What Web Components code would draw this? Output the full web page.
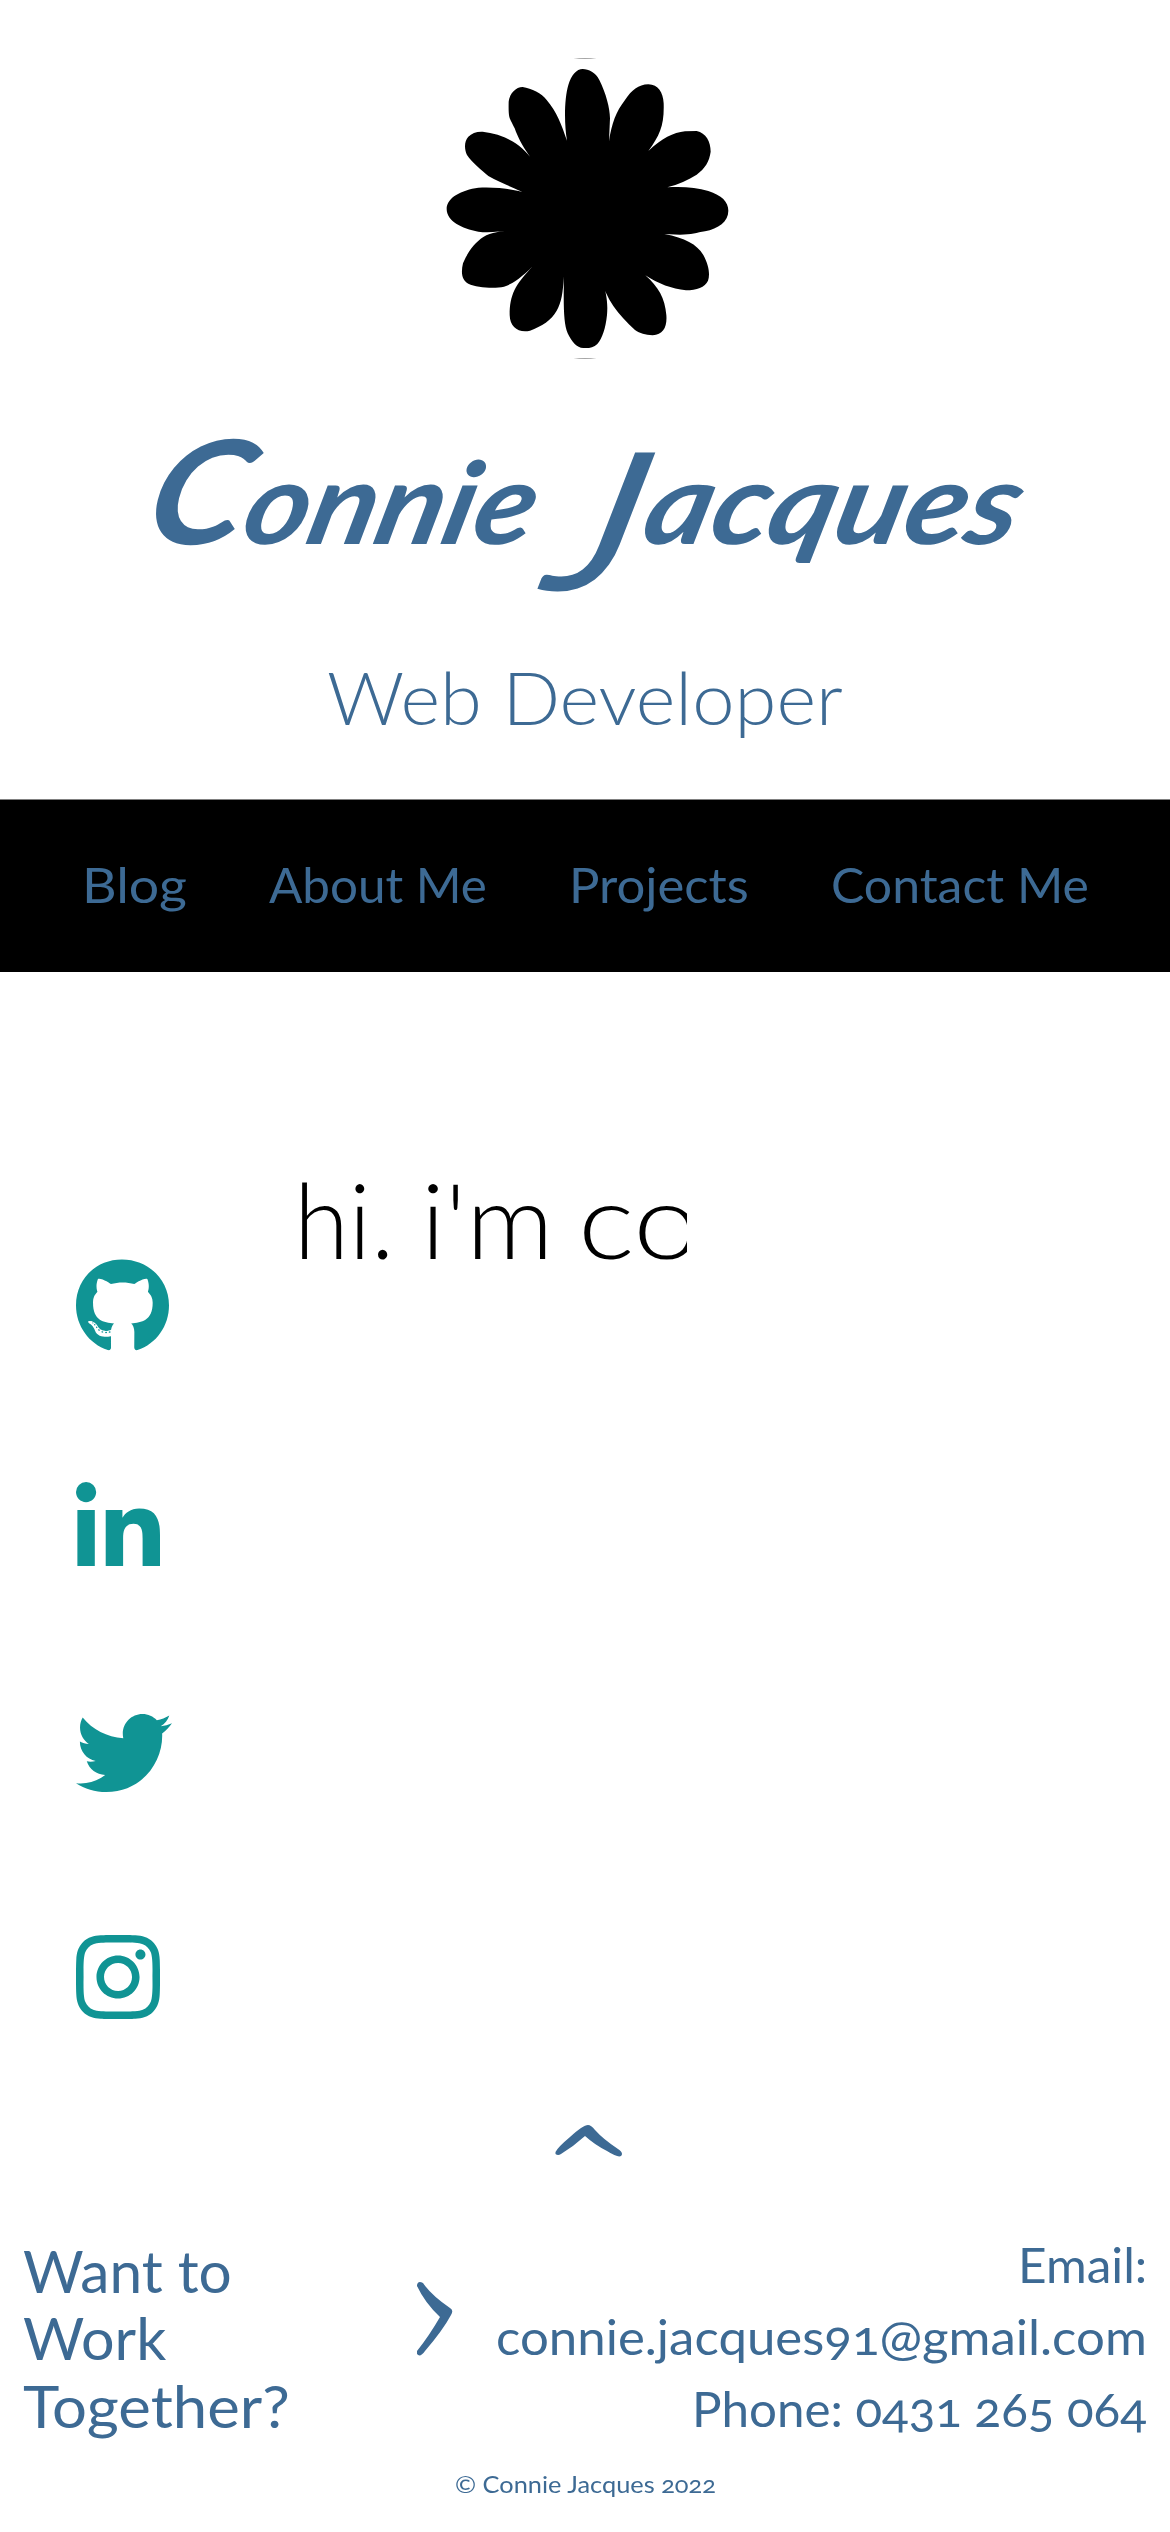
<!DOCTYPE html>
<html lang="en">
<head>
<meta charset="utf-8">
<title>Connie Jacques</title>
<style>
html,body{margin:0;background:#fff}
body{font-family:Lato,"Open Sans",sans-serif;color:#3d6a94;--brand:#3d6a94;--teal:#109494}
</style>
</head>
<body>
<portfolio-page></portfolio-page>
<script>
const define=(name,html,after)=>customElements.define(name,class extends HTMLElement{
  constructor(){super();this.attachShadow({mode:'open'}).innerHTML=html;}
  connectedCallback(){if(after)after.call(this,this.shadowRoot);}
});

/* One line of text widened or narrowed to the width given in its w attribute. */
define('fit-line',`<style>:host{display:block;white-space:pre}span{display:inline-block;transform-origin:0 50%}</style><span><slot></slot></span>`,function(root){
  const w=+this.getAttribute('w');this.style.width=w+'px';
  const s=root.querySelector('span');
  s.style.transform='scaleX('+w/s.offsetWidth+')';
});

/* A word of the signature: tall first letter, small slanted letters after it. */
define('script-word',`<style>:host{display:block;height:140px}
div{display:inline-block;white-space:nowrap;transform-origin:0 124px;font:italic 700 114px/140px Lato,sans-serif}
div::first-letter{font-size:var(--initial,144px);font-weight:var(--weight,700);line-height:0;vertical-align:var(--drop,0)}</style><div></div>`,function(root){
  const w=+this.getAttribute('w'),d=root.querySelector('div');
  d.textContent=this.getAttribute('word');this.style.width=w+'px';
  d.style.transform='skewX(-14deg) scaleX('+w/d.offsetWidth+')';
});

define('flower-mark',`<style>:host{display:block;width:310px;height:330px}svg{display:block}</style>
<svg width="310" height="330" viewBox="0 0 930 990"><defs><filter id="s" x="-5%" y="-5%" width="110%" height="110%"><feGaussianBlur stdDeviation="2"/></filter></defs>
<path filter="url(#s)" d="M411 302 C402 250 403 175 415 135 C424 105 440 87 458 87 C476 88 497 97 508 120 C528 160 540 205 540 235 L537 304 C545 250 558 215 585 180 C605 150 625 134 655 133 C685 133 699 158 701 190 C703 255 690 285 655 333 C695 295 730 278 765 274 L800 273 C828 279 842 305 842 335 C838 365 825 385 800 404 C775 420 745 433 712 442 C760 439 800 443 835 453 C875 466 895 485 895 512 C895 545 865 566 825 574 C800 578 785 584 750 584 L703 582 C765 594 800 612 820 645 C838 678 840 705 834 722 C825 742 800 751 768 751 C725 746 685 732 646 706 C685 740 705 775 709 825 C712 860 700 885 668 886 C645 884 630 880 615 870 C565 825 525 775 515 715 C530 760 534 790 531 825 C527 865 517 895 502 912 C490 924 475 925 460 924 C440 924 425 905 413 880 C401 850 400 800 402 710 C398 760 395 785 380 812 C365 840 335 859 300 872 C265 879 240 862 239 825 C239 765 255 735 308 679 C275 712 250 731 222 740 C190 747 140 742 115 731 C96 720 92 700 99 670 C113 635 135 607 160 591 C185 577 215 574 250 569 C210 575 175 579 145 575 C95 566 50 543 50 507 C50 472 95 450 145 443 C190 440 240 446 277 456 C240 438 205 426 175 408 C155 390 125 367 111 345 C102 326 103 302 115 290 C125 280 140 274 158 275 C210 280 265 305 300 350 C275 315 263 290 254 265 C238 230 235 240 236 185 C239 160 258 141 278 141 C305 145 335 160 350 180 C380 215 395 255 411 302Z"/>
<path d="M430 55 Q465 53 500 55 Q465 58 430 55Z M430 955 Q465 953 500 955 Q465 958 430 955Z" fill="#888"/></svg>`);

define('page-header',`<style>:host{display:flex;flex-direction:column;align-items:center;box-sizing:border-box;height:799px;padding-top:40px}
h1,h2{margin:0;white-space:nowrap}
h1{display:flex;gap:24px;height:140px;margin-top:60px;padding-right:22px}
.j{--initial:192px;--weight:400;--drop:-46px}
h2{font-weight:300;font-size:73px;line-height:86px;margin-top:84px}</style>
<flower-mark></flower-mark><h1><script-word w="388" word="Connie"></script-word><script-word class="j" w="460" word="Jacques"></script-word></h1><h2><fit-line w="516">Web Developer</fit-line></h2>`);

define('nav-link',`<style>:host{display:block}a{color:inherit;text-decoration:none}</style><a><slot></slot></a>`);
define('nav-bar',`<style>:host{display:flex;align-items:center;justify-content:space-between;box-sizing:border-box;height:173px;background:#000;border-top:1px solid #808080;padding:0 81px 2px 82px;font-size:48px;line-height:58px}</style>
<nav-link><fit-line w="105">Blog</fit-line></nav-link><nav-link><fit-line w="218">About Me</fit-line></nav-link><nav-link><fit-line w="180">Projects</fit-line></nav-link><nav-link><fit-line w="258">Contact Me</fit-line></nav-link>`);

const ICONS={
github:[496,'M165.9 397.4c0 2-2.3 3.6-5.2 3.6-3.3.3-5.6-1.3-5.6-3.6 0-2 2.3-3.6 5.2-3.6 3-.3 5.6 1.3 5.6 3.6zm-31.1-4.5c-.7 2 1.3 4.3 4.3 4.9 2.6 1 5.6 0 6.2-2s-1.3-4.3-4.3-5.2c-2.6-.7-5.5.3-6.2 2.3zm44.2-1.7c-2.9.7-4.9 2.6-4.6 4.9.3 2 2.9 3.3 5.9 2.6 2.9-.7 4.9-2.6 4.6-4.6-.3-1.9-3-3.2-5.9-2.9zM244.8 8C106.1 8 0 113.3 0 252c0 110.9 69.8 205.8 169.5 239.2 12.8 2.3 17.3-5.6 17.3-12.1 0-6.2-.3-40.4-.3-61.4 0 0-70 15-84.7-29.8 0 0-11.4-29.1-27.8-36.6 0 0-22.9-15.7 1.6-15.4 0 0 24.9 2 38.6 25.8 21.9 38.6 58.6 27.5 72.9 20.9 2.3-16 8.8-27.1 16-33.7-55.9-6.2-112.3-14.3-112.3-110.5 0-27.5 7.6-41.3 23.6-58.9-2.6-6.5-11.1-33.3 2.6-67.9 20.9-6.5 69 27 69 27 20-5.6 41.5-8.5 62.8-8.5s42.8 2.9 62.8 8.5c0 0 48.1-33.6 69-27 13.7 34.7 5.2 61.4 2.6 67.9 16 17.7 25.8 31.5 25.8 58.9 0 96.5-58.9 104.2-114.8 110.5 9.2 7.9 17 22.9 17 46.4 0 33.7-.3 75.4-.3 83.6 0 6.5 4.6 14.4 17.3 12.1C428.2 457.8 496 362.9 496 252 496 113.3 383.5 8 244.8 8zM97.2 352.9c-1.3 1-1 3.3.7 5.2 1.6 1.6 3.9 2.3 5.2 1 1.3-1 1-3.3-.7-5.2-1.6-1.6-3.9-2.3-5.2-1zm-10.8-8.1c-.7 1.3.3 2.9 2.3 3.9 1.6 1 3.6.7 4.3-.7.7-1.3-.3-2.9-2.3-3.9-2-.6-3.6-.3-4.3.7zm32.4 35.6c-1.6 1.3-1 4.3 1.3 6.2 2.3 2.3 5.2 2.6 6.5 1 1.3-1.3.7-4.3-1.3-6.2-2.2-2.3-5.2-2.6-6.5-1zm-11.4-14.7c-1.6 1-1.6 3.6 0 5.9 1.6 2.3 4.3 3.3 5.6 2.3 1.6-1.3 1.6-3.9 0-6.2-1.4-2.3-4-3.3-5.6-2z'],
linkedin:[448,'M100.28 448H7.4V148.9h92.88zM53.79 108.1C24.09 108.1 0 83.5 0 53.8a53.79 53.79 0 0 1 107.58 0c0 29.7-24.1 54.3-53.79 54.3zM447.9 448h-92.68V302.4c0-34.7-.7-79.2-48.29-79.2-48.29 0-55.69 37.7-55.69 76.7V448h-92.78V148.9h89.08v40.8h1.3c12.4-23.5 42.69-48.3 87.88-48.3 94 0 111.28 61.9 111.28 142.3V448z'],
twitter:[512,'M459.37 151.716c.325 4.548.325 9.097.325 13.645 0 138.72-105.583 298.558-298.558 298.558-59.452 0-114.68-17.219-161.137-47.106 8.447.974 16.568 1.299 25.34 1.299 49.055 0 94.213-16.568 130.274-44.832-46.132-.975-84.792-31.188-98.112-72.772 6.498.974 12.995 1.624 19.818 1.624 9.421 0 18.843-1.3 27.614-3.573-48.081-9.747-84.143-51.98-84.143-102.985v-1.299c13.969 7.797 30.214 12.67 47.431 13.319-28.264-18.843-46.781-51.005-46.781-87.391 0-19.492 5.197-37.36 14.294-52.954 51.655 63.675 129.3 105.258 216.365 109.807-1.624-7.797-2.599-15.918-2.599-24.04 0-57.828 46.782-104.934 104.934-104.934 30.213 0 57.502 12.67 76.67 33.137 23.715-4.548 46.456-13.32 66.599-25.34-7.798 24.366-24.366 44.833-46.132 57.827 21.117-2.273 41.584-8.122 60.426-16.243-14.292 20.791-32.161 39.308-52.628 54.253z'],
instagram:[448,'M224.1 141c-63.6 0-114.9 51.3-114.9 114.9s51.3 114.9 114.9 114.9S339 319.5 339 255.9 287.7 141 224.1 141zm0 189.6c-41.1 0-74.7-33.5-74.7-74.7s33.5-74.7 74.7-74.7 74.7 33.5 74.7 74.7-33.6 74.7-74.7 74.7zm146.4-194.3c0 14.9-12 26.8-26.8 26.8-14.9 0-26.8-12-26.8-26.8s12-26.8 26.8-26.8 26.8 12 26.8 26.8zm76.1 27.2c-1.7-35.9-9.9-67.7-36.2-93.9-26.2-26.2-58-34.4-93.9-36.2-37-2.1-147.9-2.1-184.9 0-35.8 1.7-67.6 9.9-93.9 36.1s-34.4 58-36.2 93.9c-2.1 37-2.1 147.9 0 184.9 1.7 35.9 9.9 67.7 36.2 93.9s58 34.4 93.9 36.2c37 2.1 147.9 2.1 184.9 0 35.9-1.7 67.7-9.9 93.9-36.2 26.2-26.2 34.4-58 36.2-93.9 2.1-37 2.1-147.8 0-184.8zM398.8 388c-7.8 19.6-22.9 34.7-42.6 42.6-29.5 11.7-99.5 9-132.1 9s-102.7 2.6-132.1-9c-19.6-7.8-34.7-22.9-42.6-42.6-11.7-29.5-9-99.5-9-132.1s-2.6-102.7 9-132.1c7.8-19.6 22.9-34.7 42.6-42.6 29.5-11.7 99.5-9 132.1-9s102.7-2.6 132.1 9c19.6 7.8 34.7 22.9 42.6 42.6 11.7 29.5 9 99.5 9 132.1s2.7 102.7-9 132.1z']};
define('social-icon',`<style>:host{display:block;height:96px}svg{display:block;height:96px;fill:var(--teal)}</style><svg><path/></svg>`,function(root){
  const [w,d]=ICONS[this.getAttribute('name')],svg=root.querySelector('svg');
  svg.setAttribute('viewBox',`0 0 ${w} 512`);svg.setAttribute('width',w*96/512);
  root.querySelector('path').setAttribute('d',d);
});
define('social-links',`<style>:host{display:flex;flex-direction:column;gap:127.7px;padding-top:286px;width:96px}</style>
<social-icon name="github"></social-icon><social-icon name="linkedin"></social-icon><social-icon name="twitter"></social-icon><social-icon name="instagram"></social-icon>`);

define('typed-text',`<style>:host{display:flex;box-sizing:border-box;width:393px;height:126px;overflow:hidden;color:#000;font-weight:300;font-size:105px;line-height:126px;white-space:pre}</style>
<fit-line w="127">hi. </fit-line><fit-line w="162">i'm </fit-line><fit-line w="122">co</fit-line>`);
define('page-main',`<style>:host{display:flex;height:1153px;padding-left:76px}typed-text{margin:183px 0 0 122px}</style><social-links></social-links><typed-text></typed-text>`);

define('page-footer',`<style>:host{display:flex;flex-direction:column;height:407px}
svg{display:block;fill:var(--brand)}
.top{align-self:center;margin-left:8px;height:32px}
.row{display:flex;margin-top:72px;padding:0 23px;height:216px}
.cta{font-size:58px;line-height:67.5px;padding-top:7.6px;width:394px}
.arrow{margin-top:52px;width:36px}
.contact{margin-left:auto;display:flex;flex-direction:column;align-items:flex-end;font-size:48px;line-height:72px;font-feature-settings:"onum"}
.copy{align-self:center;margin:24px 0 0 1px;font-size:24px;line-height:30px;font-feature-settings:"onum"}</style>
<svg class="top" width="68" height="32" viewBox="0 0 68 32"><path d="M.5 27Q3 22 15 12Q28 0 33 0Q36 0 40 5Q48 14 63 24Q69 28 66 31Q63 33 52 26Q40 20 30 11Q19 21 6 29Q3 31 .5 29Z"/></svg>
<div class="row"><div class="cta"><fit-line w="209">Want to</fit-line><fit-line w="143">Work</fit-line><fit-line w="267">Together?</fit-line></div>
<svg class="arrow" width="36" height="75" viewBox="0 0 36 75"><path d="M0 4Q1 -1 6 2Q14 14 33 27Q37 29 34 34Q26 49 8 70Q3 77 0 73V70Q12 55 23 36Q8 22 0 5Z"/></svg>
<div class="contact"><fit-line w="129">Email:</fit-line><fit-line w="651">connie.jacques91@gmail.com</fit-line><fit-line w="455">Phone: 0431 265 064</fit-line></div></div>
<div class="copy"><fit-line w="261">© Connie Jacques 2022</fit-line></div>`);

define('portfolio-page',`<style>:host{display:block;width:1170px;height:2532px;overflow:hidden}</style><page-header></page-header><nav-bar></nav-bar><page-main></page-main><page-footer></page-footer>`);
</script>
</body>
</html>
